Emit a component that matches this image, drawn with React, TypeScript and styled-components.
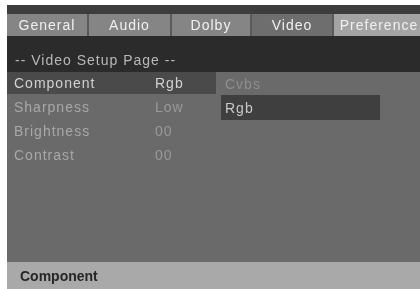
import React from "react";
import styled, { createGlobalStyle } from "styled-components";

const GlobalStyle = createGlobalStyle`
  html, body {
    margin: 0;
    padding: 0;
    background: #ffffff;
  }
  body {
    font-family: "Liberation Sans", Arial, sans-serif;
  }
`;

const Screen = styled.div`
  margin: 5px 0 0 7px;
  width: 413px;
  height: 284px;
  background: #6a6a6a;
  display: flex;
  flex-direction: column;
  overflow: hidden;
  filter: blur(0.4px);
`;

const TopBand = styled.div`
  height: 9px;
  background: #3d3d3d;
`;

const TabBar = styled.div`
  height: 22px;
  display: flex;
  gap: 2px;
  background: #5a5a5a;
`;

type TabKind = "normal" | "active" | "light";

const tabColours: Record<TabKind, string> = {
  normal: "#858585",
  active: "#6e6e6e",
  light: "#a4a4a4",
};

const Tab = styled.div<{ $w: number; $kind: TabKind }>`
  flex: 0 0 ${(p) => p.$w}px;
  display: flex;
  align-items: center;
  justify-content: center;
  background: ${(p) => tabColours[p.$kind]};
  color: #f0f0f0;
  font-size: 14px;
  letter-spacing: 1px;
  white-space: nowrap;
`;

const TitleBar = styled.div`
  height: 36px;
  background: #2b2b2b;
  display: flex;
  align-items: flex-end;
  padding: 0 0 4px 8px;
  box-sizing: border-box;
  color: #b8b8b8;
  font-size: 14px;
  letter-spacing: 1px;
`;

const Body = styled.div`
  flex: 1;
  display: flex;
`;

const SettingsList = styled.div`
  width: 209px;
  display: flex;
  flex-direction: column;
  gap: 2px;
`;

const SettingRow = styled.div<{ $selected?: boolean }>`
  height: 22px;
  display: flex;
  align-items: center;
  padding-left: 7px;
  background: ${(p) => (p.$selected ? "#4a4a4a" : "transparent")};
  color: ${(p) => (p.$selected ? "#d2d2d2" : "#a8a8a8")};
  font-size: 14px;
  letter-spacing: 1px;
`;

const Label = styled.span`
  width: 141px;
`;

const Value = styled.span<{ $dim?: boolean }>`
  color: ${(p) => (p.$dim ? "#999999" : "inherit")};
`;

const OptionList = styled.div`
  display: flex;
  flex-direction: column;
  padding-left: 5px;
`;

const Option = styled.div<{ $selected?: boolean }>`
  width: 159px;
  height: ${(p) => (p.$selected ? 25 : 23)}px;
  display: flex;
  align-items: center;
  padding-left: 4px;
  box-sizing: border-box;
  background: ${(p) => (p.$selected ? "#3f3f3f" : "transparent")};
  color: ${(p) => (p.$selected ? "#c8c8c8" : "#8e8e8e")};
  font-size: 14px;
  letter-spacing: 1px;
`;

const StatusBar = styled.div`
  height: 27px;
  background: #a9a9a9;
  display: flex;
  align-items: center;
  padding-left: 13px;
  color: #262626;
  font-size: 14px;
  font-weight: bold;
`;

const tabs: { name: string; w: number; kind: TabKind }[] = [
  { name: "General", w: 80, kind: "normal" },
  { name: "Audio", w: 81, kind: "normal" },
  { name: "Dolby", w: 78, kind: "normal" },
  { name: "Video", w: 80, kind: "active" },
  { name: "Preference", w: 90, kind: "light" },
];

const settings = [
  { label: "Component", value: "Rgb", selected: true },
  { label: "Sharpness", value: "Low" },
  { label: "Brightness", value: "00" },
  { label: "Contrast", value: "00" },
];

const App: React.FC = () => {
  return (
    <>
      <GlobalStyle />
      <Screen>
        <TopBand />
        <TabBar>
          {tabs.map((t) => (
            <Tab key={t.name} $w={t.w} $kind={t.kind}>
              {t.name}
            </Tab>
          ))}
        </TabBar>
        <TitleBar>-- Video Setup Page --</TitleBar>
        <Body>
          <SettingsList>
            {settings.map((s) => (
              <SettingRow key={s.label} $selected={s.selected}>
                <Label>{s.label}</Label>
                <Value $dim={!s.selected}>{s.value}</Value>
              </SettingRow>
            ))}
          </SettingsList>
          <OptionList>
            <Option>Cvbs</Option>
            <Option $selected>Rgb</Option>
          </OptionList>
        </Body>
        <StatusBar>Component</StatusBar>
      </Screen>
    </>
  );
};

export default App;
